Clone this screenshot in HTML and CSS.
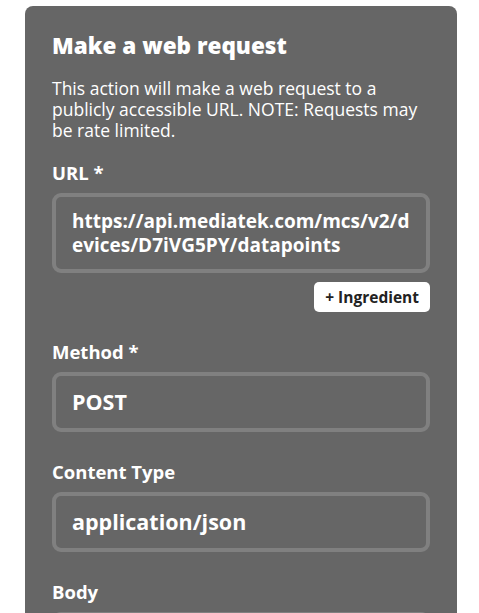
FILE: index.html
```html
<!DOCTYPE html>
<html lang="en">
<head>
    <meta charset="UTF-8">
    <title>Make a web request</title>
    <link rel="stylesheet" href="styles.css">
</head>
<body>
    <div class="card">
        <h1>Make a web request</h1>
        <p class="intro">This action will make a web request to a publicly accessible URL. NOTE: Requests may be rate limited.</p>

        <div class="field">
            <label>URL *</label>
            <div class="box">https://api.mediatek.com/mcs/v2/devices/D7iVG5PY/datapoints</div>
            <div class="actions">
                <button class="ingredient">+ Ingredient</button>
            </div>
        </div>

        <div class="field">
            <label>Method *</label>
            <div class="box big">POST</div>
        </div>

        <div class="field">
            <label>Content Type</label>
            <div class="box big">application/json</div>
        </div>

        <div class="field">
            <label>Body</label>
            <div class="box"></div>
        </div>
    </div>
</body>
</html>
```

FILE: styles.css
```css
* {
    margin: 0;
    padding: 0;
    box-sizing: border-box;
}

body {
    background: #fff;
    font-family: "Open Sans", "Noto Sans", sans-serif;
    color: #fff;
    overflow: hidden;
    height: 613px;
}

.card {
    margin: 6px 0 0 25px;
    width: 432px;
    background: #666;
    border-radius: 8px 8px 0 0;
    padding: 26px 27px 40px;
    min-height: 700px;
}

.card h1 {
    font-weight: 800;
    font-size: 22.5px;
    line-height: 28px;
    margin-bottom: 18px;
}

.intro {
    font-size: 17.5px;
    line-height: 21px;
    margin-bottom: 21px;
}

.field {
    margin-bottom: 29px;
}

.field label {
    display: block;
    font-weight: 700;
    font-size: 18.5px;
    line-height: 22px;
    margin-bottom: 9px;
}

.box {
    border: 4px solid #808080;
    border-radius: 9px;
    padding: 12px 16px;
    font-weight: 700;
    font-size: 19px;
    line-height: 24px;
    min-height: 60px;
    display: flex;
    align-items: center;
    word-break: break-all;
}

.box.big {
    font-size: 21.5px;
}

.actions {
    display: flex;
    justify-content: flex-end;
    margin-top: 9px;
}

.ingredient {
    background: #fff;
    color: #222;
    border: none;
    border-radius: 5px;
    font-family: "Open Sans", sans-serif;
    font-weight: 700;
    font-size: 15.5px;
    height: 30px;
    padding: 0 11px;
}
```
